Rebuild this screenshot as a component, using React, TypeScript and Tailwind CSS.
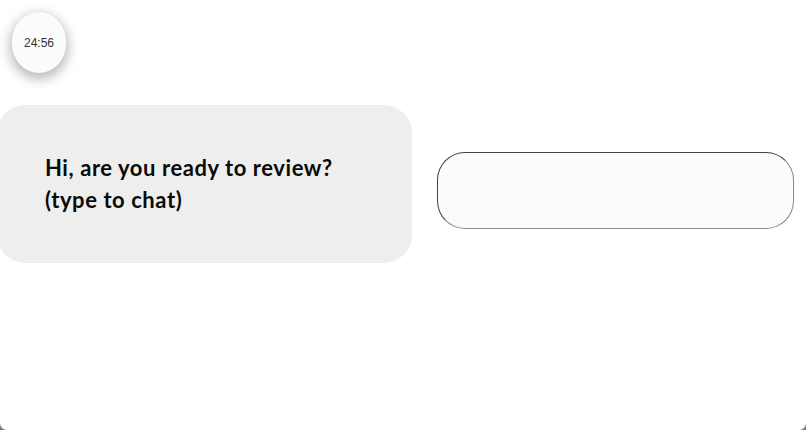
export default function App() {
  return (
    <div className="w-[806px] h-[430px] bg-[#777777] overflow-hidden">
      <div className="w-full h-full bg-white rounded-b-[7px] flex flex-col overflow-hidden">
        <div className="ml-3 mt-3 w-[54px] h-[61px] pt-px rounded-[27px/29px] bg-[#fbfbfb] shadow-[0_4px_12px_2px_rgba(0,0,0,0.28)] flex items-center justify-center font-['Liberation_Sans',sans-serif] text-[12px] text-[#333333]">
          24:56
        </div>
        <div className="mt-8 flex items-start gap-[25px]">
          <div className="ml-[-3px] w-[415px] h-[158px] shrink-0 rounded-[28px] bg-[#eeeeee] pl-12 flex flex-col justify-center font-['Lato',sans-serif] font-bold text-[22px] tracking-[0.57px] leading-[32px] text-[#0a0a0a]">
            <div>Hi, are you ready to review?</div>
            <div>(type to chat)</div>
          </div>
          <div className="mt-[46.5px] w-[357px] h-[77px] shrink-0 rounded-[28px] bg-[#fbfbfb] border-[1.5px] border-t-[#444444] border-l-[#444444] border-r-[#888888] border-b-[#888888]"></div>
        </div>
      </div>
    </div>
  );
}
